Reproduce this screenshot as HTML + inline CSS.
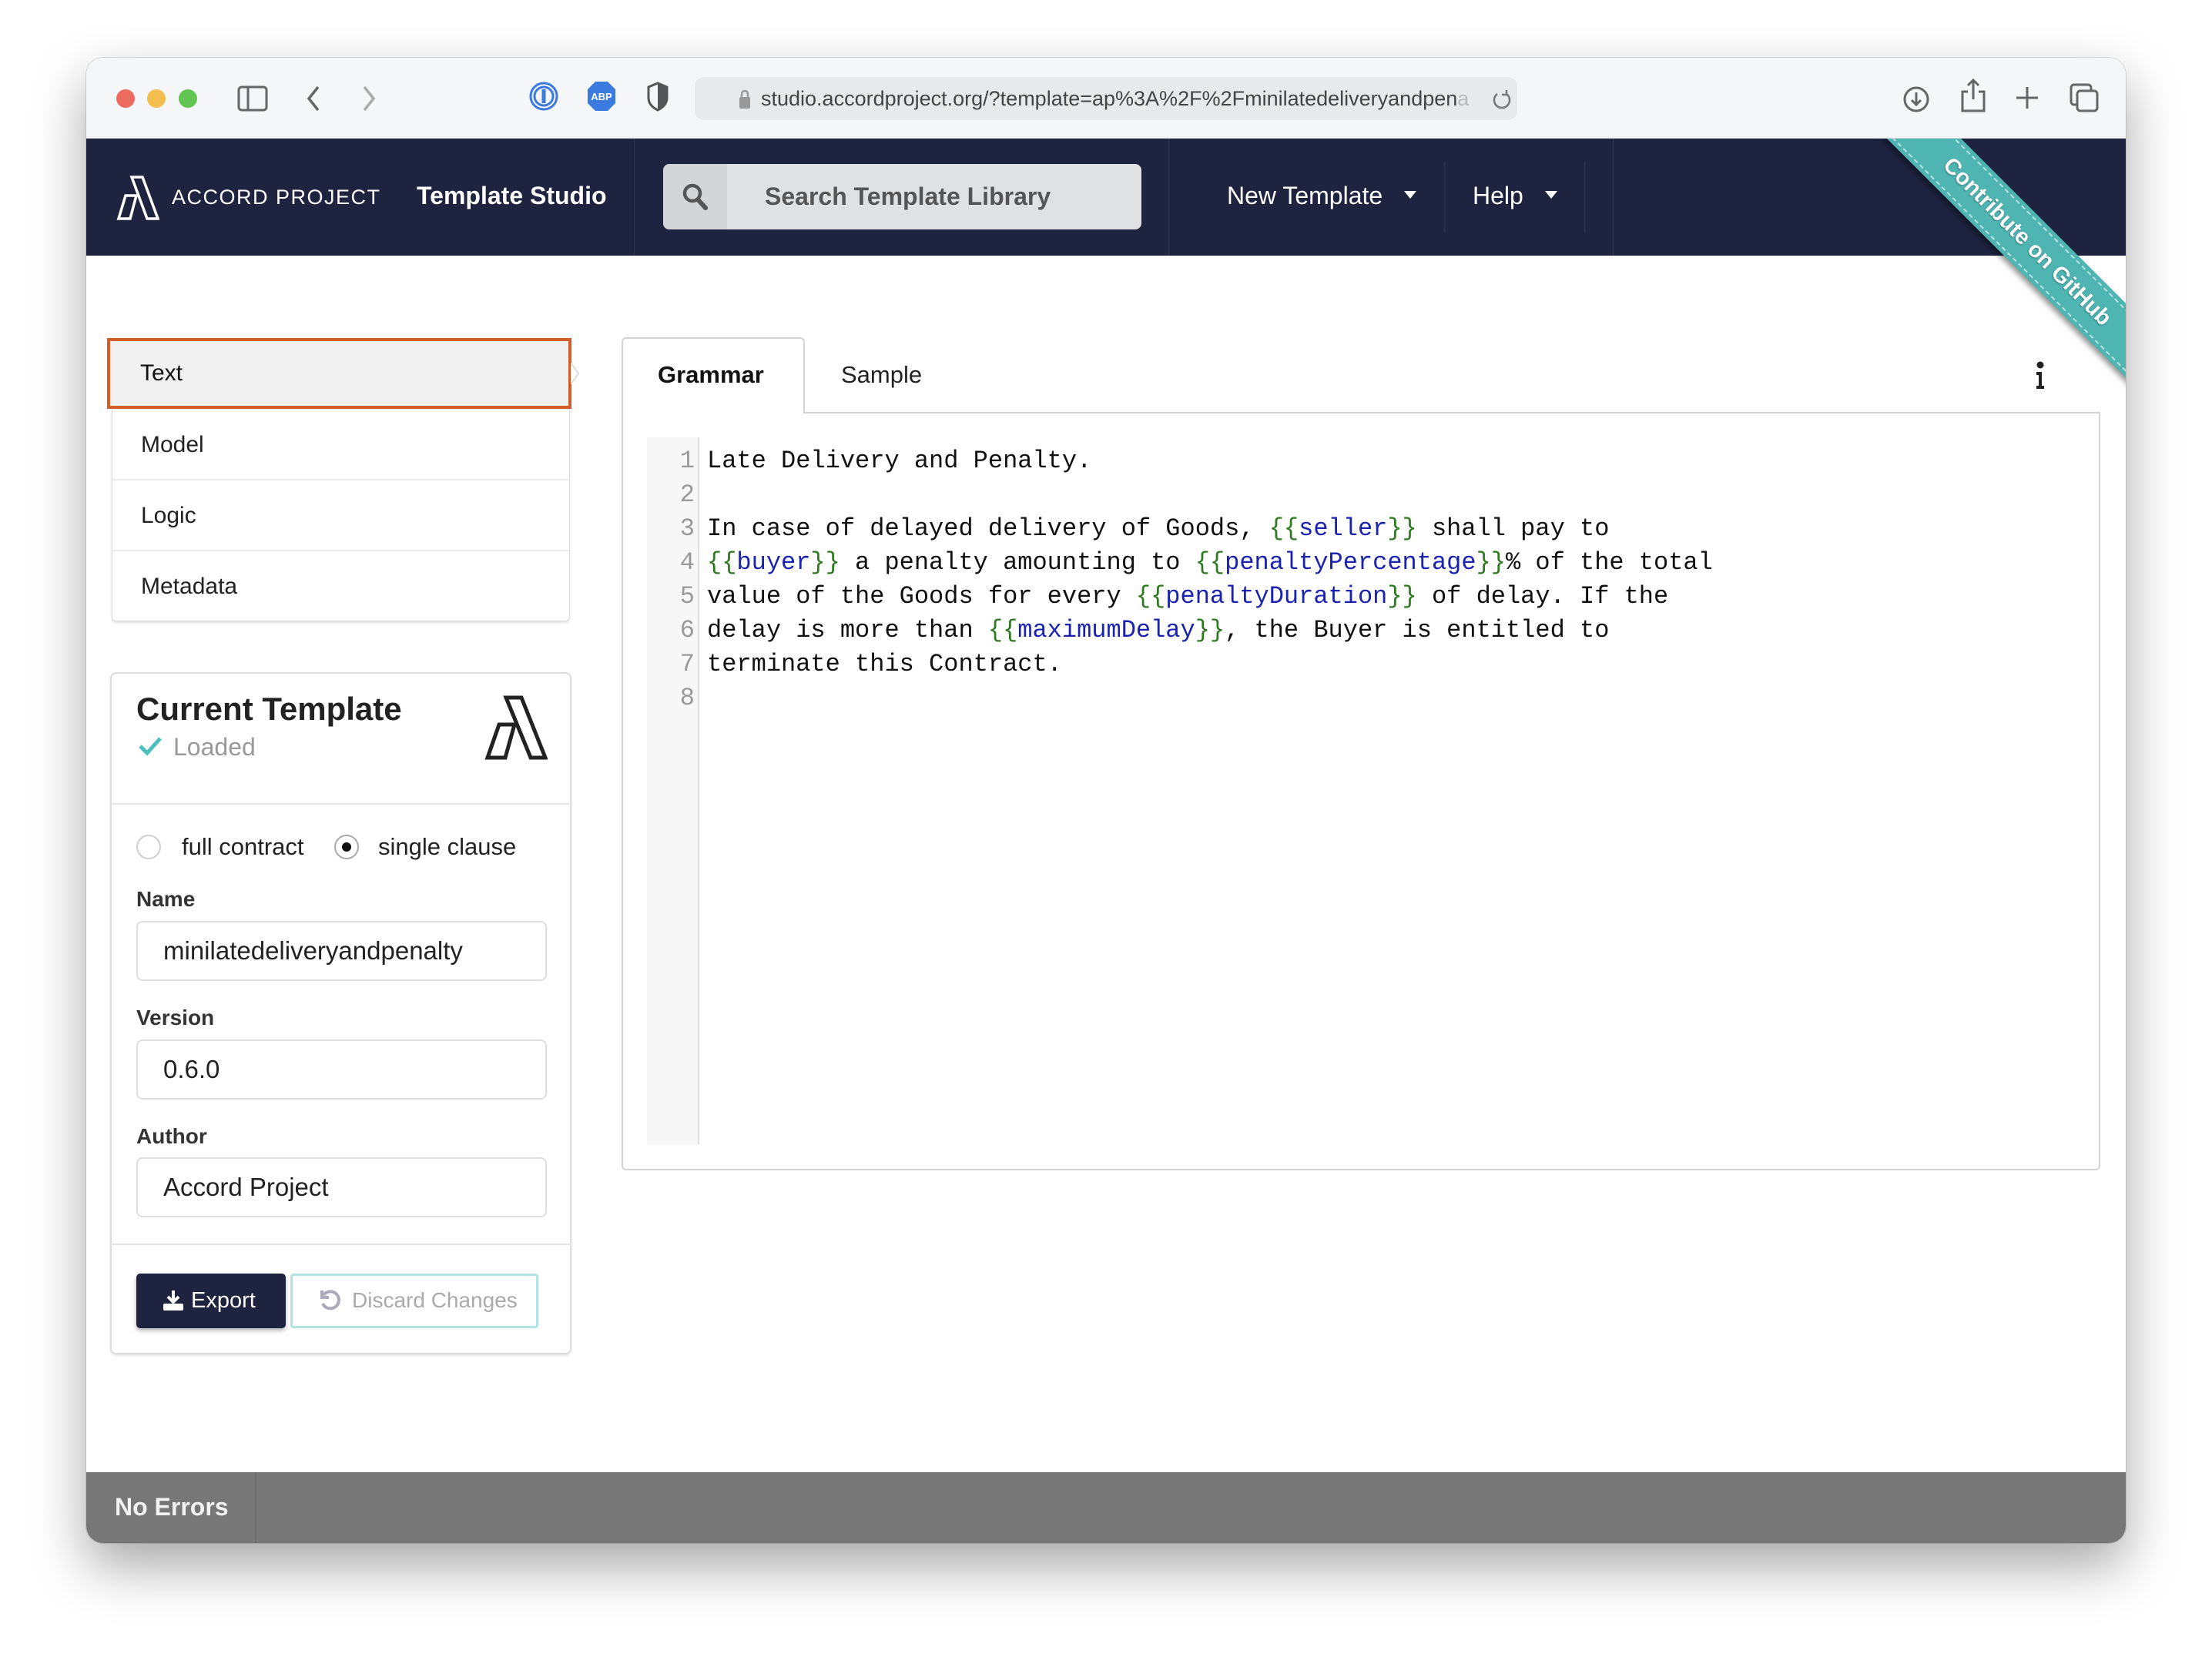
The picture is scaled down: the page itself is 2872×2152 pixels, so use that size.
<!DOCTYPE html>
<html><head><meta charset="utf-8">
<style>
*{box-sizing:border-box;margin:0;padding:0}
body{width:2872px;height:2152px;background:#fff;position:relative;overflow:hidden;font-family:"Liberation Sans",Arial,sans-serif;}
.abs{position:absolute}
#win{position:absolute;left:112px;top:75px;width:2648px;height:1929px;border-radius:22px;overflow:hidden;background:#fff;box-shadow:0 30px 70px rgba(0,0,0,0.35),0 0 0 1px rgba(0,0,0,0.12);}
.tb{left:0;top:0;width:2648px;height:105px;background:#f5f6f8;border-bottom:1px solid #d8d8d8}
.dot{width:24px;height:24px;border-radius:50%;top:41px}
.nav{left:0;top:105px;width:2648px;height:152px;background:#1e233f}
.vd{width:1px;background:#2f3552}
.menu{left:33px;top:364px;width:595px;height:368px;border:1px solid #dcdcdc;border-radius:6px;box-shadow:0 2px 3px rgba(0,0,0,.12);background:#fff}
.mi{position:absolute;left:0;width:100%;height:92px;font-size:30px;color:#222;padding-left:37px;line-height:92px;border-top:2px solid #ececec}
.code{font-family:"Liberation Mono","DejaVu Sans Mono",monospace;font-size:32px;line-height:44px;white-space:pre;color:#111}
.g{color:#2f7a20}.b{color:#1a22b0}
.lab{font-size:28px;font-weight:bold;color:#333}
.inp{left:65px;width:533px;height:78px;border:2px solid #dedede;border-radius:8px;font-size:33px;color:#222;padding-left:33px;line-height:74px;font-family:"Liberation Sans",sans-serif}
</style></head><body>
<div id="win">
  <div class="abs tb">
    <div class="abs dot" style="left:39px;background:#ec6a5e"></div>
    <div class="abs dot" style="left:79px;background:#f5bf4f"></div>
    <div class="abs dot" style="left:120px;background:#61c554"></div>
    <svg class="abs" style="left:196px;top:36px" width="40" height="34" viewBox="0 0 40 34"><rect x="2" y="2" width="36" height="30" rx="4" fill="none" stroke="#666" stroke-width="3"/><line x1="14" y1="2" x2="14" y2="32" stroke="#666" stroke-width="3"/></svg>
    <svg class="abs" style="left:283px;top:35px" width="24" height="36"><path d="M18 3 L6 18 L18 33" fill="none" stroke="#666" stroke-width="3.5"/></svg>
    <svg class="abs" style="left:355px;top:35px" width="24" height="36"><path d="M6 3 L18 18 L6 33" fill="none" stroke="#aaa" stroke-width="3.5"/></svg>
    <svg class="abs" style="left:574px;top:29px" width="40" height="42"><circle cx="20" cy="21" r="17" fill="none" stroke="#3b7be0" stroke-width="3"/><circle cx="20" cy="21" r="12" fill="none" stroke="#3b7be0" stroke-width="3"/><rect x="17.5" y="12" width="5" height="18" fill="#3b7be0"/></svg>
    <svg class="abs" style="left:649px;top:29px" width="40" height="42"><polygon points="12,2 28,2 38,12 38,30 28,40 12,40 2,30 2,12" fill="#3b7be0"/><text x="20" y="26" fill="#fff" font-size="13" font-weight="bold" text-anchor="middle" font-family="Liberation Sans">ABP</text></svg>
    <svg class="abs" style="left:727px;top:30px" width="30" height="40"><path d="M15 3 L27 8 L27 22 C27 30 21 35 15 38 C9 35 3 30 3 22 L3 8 Z" fill="none" stroke="#555" stroke-width="3"/><path d="M15 3 L27 8 L27 22 C27 30 21 35 15 38 Z" fill="#555"/></svg>
    <div class="abs" style="left:790px;top:25px;width:1068px;height:56px;background:#e8e9eb;border-radius:12px"></div>
    <svg class="abs" style="left:846px;top:40px" width="18" height="28"><rect x="2" y="11" width="14" height="15" rx="2" fill="#999"/><path d="M5 12 V7 a4 4 0 0 1 8 0 V12" fill="none" stroke="#999" stroke-width="2.5"/></svg>
    <div class="abs" style="left:876px;top:31px;font-size:27px;color:#444;line-height:44px;white-space:nowrap;width:930px;overflow:hidden">studio.accordproject.org/?template=ap%3A%2F%2Fminilatedeliveryandpen<span style="color:#bbb">a</span></div>
    <svg class="abs" style="left:1824px;top:39px" width="28" height="30"><path d="M20 8 A10 10 0 1 1 8 8" fill="none" stroke="#777" stroke-width="2.5"/><path d="M20 3 L20 9 L14 9" fill="none" stroke="#777" stroke-width="2.5"/></svg>
    <svg class="abs" style="left:2358px;top:36px" width="36" height="36"><circle cx="18" cy="18" r="15" fill="none" stroke="#666" stroke-width="3"/><path d="M18 9 V25 M12 19 L18 25 L24 19" fill="none" stroke="#666" stroke-width="3"/></svg>
    <svg class="abs" style="left:2432px;top:26px" width="36" height="46"><path d="M18 3 V28 M11 10 L18 3 L25 10" fill="none" stroke="#666" stroke-width="3"/><path d="M11 18 H4 V43 H32 V18 H25" fill="none" stroke="#666" stroke-width="3"/></svg>
    <svg class="abs" style="left:2502px;top:34px" width="36" height="36"><path d="M18 4 V32 M4 18 H32" stroke="#666" stroke-width="3"/></svg>
    <svg class="abs" style="left:2574px;top:32px" width="40" height="40"><rect x="3" y="3" width="26" height="26" rx="4" fill="none" stroke="#666" stroke-width="3"/><rect x="11" y="11" width="26" height="26" rx="4" fill="#f5f6f8" stroke="#666" stroke-width="3"/></svg>
  </div>

  <div class="abs nav">
    <svg class="abs" style="left:39px;top:48px" width="56" height="58" viewBox="0 0 56 58"><path d="M20 2 H34 L54 56 H40 Z" fill="none" stroke="#fff" stroke-width="3.5"/><path d="M12 26 H26 L18 56 H3 Z" fill="none" stroke="#fff" stroke-width="3.5"/></svg>
    <div class="abs" style="left:111px;top:58px;font-size:27px;letter-spacing:1.5px;color:#fff;line-height:36px">ACCORD PROJECT</div>
    <div class="abs" style="left:429px;top:54px;font-size:32px;font-weight:bold;color:#fff;line-height:40px">Template Studio</div>
    <div class="abs vd" style="left:711px;top:0;height:152px"></div>
    <div class="abs" style="left:749px;width:621px;height:85px;background:#e0e1e2;border-radius:8px;top:33px;overflow:hidden">
      <div class="abs" style="left:0;top:0;width:83px;height:85px;background:#d4d5d6"></div>
      <svg class="abs" style="left:24px;top:24px" width="36" height="38"><circle cx="14" cy="14" r="10" fill="none" stroke="#555" stroke-width="4.5"/><path d="M21 22 L31 33" stroke="#555" stroke-width="6" stroke-linecap="round"/></svg>
      <div class="abs" style="left:132px;top:22px;font-size:32px;font-weight:bold;color:#555;line-height:40px">Search Template Library</div>
    </div>
    <div class="abs vd" style="left:1405px;top:0;height:152px"></div>
    <div class="abs" style="left:1481px;top:52px;font-size:32px;color:#fff;line-height:44px">New Template</div>
    <svg class="abs" style="left:1711px;top:68px" width="16" height="12"><path d="M0 0 H16 L8 10 Z" fill="#fff"/></svg>
    <div class="abs vd" style="left:1763px;top:30px;height:92px"></div>
    <div class="abs" style="left:1800px;top:52px;font-size:32px;color:#fff;line-height:44px">Help</div>
    <svg class="abs" style="left:1894px;top:68px" width="16" height="12"><path d="M0 0 H16 L8 10 Z" fill="#fff"/></svg>
    <div class="abs vd" style="left:1945px;top:30px;height:92px"></div>
    <div class="abs vd" style="left:1982px;top:0;height:152px"></div>
  </div>

  <div class="abs" style="left:2100px;top:105px;width:548px;height:500px;overflow:hidden">
    <div class="abs" style="left:120px;top:100px;width:600px;height:68px;background:#4fb5b3;transform:rotate(45deg);transform-origin:center;box-shadow:0 4px 8px rgba(0,0,0,.45);">
      <div style="position:absolute;left:0;right:0;top:5px;bottom:5px;border-top:2px dashed rgba(255,255,255,.6);border-bottom:2px dashed rgba(255,255,255,.6);text-align:center;font-size:29px;font-weight:bold;color:#fff;line-height:54px;text-shadow:0 1px 2px rgba(0,0,0,.4)">Contribute on GitHub</div>
    </div>
  </div>

  <div class="abs menu">
    <div class="mi" style="top:0;border-top:none;height:90px">Text</div>
    <div class="mi" style="top:90px">Model</div>
    <div class="mi" style="top:182px">Logic</div>
    <div class="mi" style="top:274px">Metadata</div>
  </div>
  <div class="abs" style="left:27px;top:364px;width:603px;height:92px;border:4px solid #d35d27;background:#f1f1f1;font-size:30px;color:#111;padding-left:39px;line-height:84px">Text</div>
  <svg class="abs" style="left:629px;top:396px" width="12" height="28"><path d="M0 0 L10 14 L0 28" fill="#fff" stroke="#ddd" stroke-width="2"/></svg>

  <div class="abs" style="left:31px;top:798px;width:599px;height:886px;border:2px solid #dcdcdc;border-radius:8px;box-shadow:0 2px 3px rgba(0,0,0,.1)"></div>
  <div class="abs" style="left:65px;top:821px;font-size:42px;font-weight:bold;color:#222;line-height:50px">Current Template</div>
  <svg class="abs" style="left:67px;top:881px" width="32" height="26"><path d="M3 13 L12 22 L29 3" fill="none" stroke="#4dbfbf" stroke-width="5"/></svg>
  <div class="abs" style="left:113px;top:875px;font-size:32px;color:#999;line-height:40px">Loaded</div>
  <svg class="abs" style="left:517px;top:828px" width="82" height="84" viewBox="0 0 82 84"><path d="M28 3 H48 L79 81 H60 Z" fill="none" stroke="#222" stroke-width="5"/><path d="M19 38 H39 L27 81 H4 Z" fill="none" stroke="#222" stroke-width="5"/></svg>
  <div class="abs" style="left:32px;top:968px;width:597px;height:2px;background:#e6e6e6"></div>
  <div class="abs" style="left:65px;top:1009px;width:32px;height:32px;border:2px solid #d0d0d0;border-radius:50%"></div>
  <div class="abs" style="left:124px;top:1005px;font-size:31px;color:#222;line-height:40px">full contract</div>
  <div class="abs" style="left:322px;top:1009px;width:32px;height:32px;border:2px solid #aaa;border-radius:50%"></div>
  <div class="abs" style="left:332px;top:1019px;width:12px;height:12px;background:#111;border-radius:50%"></div>
  <div class="abs" style="left:379px;top:1005px;font-size:31px;color:#222;line-height:40px">single clause</div>

  <div class="abs lab" style="left:65px;top:1076px;line-height:34px">Name</div>
  <div class="abs inp" style="top:1121px">minilatedeliveryandpenalty</div>
  <div class="abs lab" style="left:65px;top:1230px;line-height:34px">Version</div>
  <div class="abs inp" style="top:1275px">0.6.0</div>
  <div class="abs lab" style="left:65px;top:1384px;line-height:34px">Author</div>
  <div class="abs inp" style="top:1428px">Accord Project</div>
  <div class="abs" style="left:32px;top:1540px;width:597px;height:2px;background:#e6e6e6"></div>
  <div class="abs" style="left:65px;top:1579px;width:194px;height:71px;background:#1e233f;border-radius:5px;box-shadow:0 3px 6px rgba(0,0,0,.3)"></div>
  <svg class="abs" style="left:99px;top:1600px" width="28" height="28"><path d="M14 1 V15 M7 9 L14 16 L21 9" fill="none" stroke="#fff" stroke-width="4"/><rect x="1" y="18" width="26" height="9" rx="2" fill="#fff"/></svg>
  <div class="abs" style="left:136px;top:1594px;font-size:29px;color:#fff;line-height:40px">Export</div>
  <div class="abs" style="left:265px;top:1579px;width:322px;height:71px;border:3px solid #b2e2e2;border-radius:4px"></div>
  <svg class="abs" style="left:302px;top:1599px" width="30" height="30"><path d="M6 8 A11 11 0 1 1 5 19" fill="none" stroke="#aab" stroke-width="4"/><path d="M4 2 V11 H13" fill="none" stroke="#aab" stroke-width="4"/></svg>
  <div class="abs" style="left:345px;top:1594px;font-size:28px;color:#aaa;line-height:40px">Discard Changes</div>

  <div class="abs" style="left:695px;top:460px;width:1920px;height:985px;border:2px solid #d4d4d5;border-radius:0 0 6px 6px"></div>
  <div class="abs" style="left:695px;top:363px;width:238px;height:99px;border:2px solid #d4d4d5;border-bottom:none;border-radius:6px 6px 0 0;background:#fff"></div>
  <div class="abs" style="left:742px;top:390px;font-size:31px;font-weight:bold;color:#111;line-height:44px">Grammar</div>
  <div class="abs" style="left:980px;top:390px;font-size:31px;color:#222;line-height:44px">Sample</div>
  <svg class="abs" style="left:2529px;top:394px" width="16" height="38"><circle cx="8" cy="5" r="4.5" fill="#222"/><path d="M3 14 H10 V32 H13 V36 H3 V32 H6 V18 H3 Z" fill="#222"/></svg>

  <div class="abs" style="left:728px;top:493px;width:68px;height:919px;background:#f7f7f7;border-right:2px solid #e0e0e0"></div>
  <div class="abs code" style="left:728px;top:502px;width:62px;text-align:right;color:#999">1
2
3
4
5
6
7
8</div>
  <div class="abs code" style="left:806px;top:502px">Late Delivery and Penalty.

In case of delayed delivery of Goods, <span class="g">{{</span><span class="b">seller</span><span class="g">}}</span> shall pay to
<span class="g">{{</span><span class="b">buyer</span><span class="g">}}</span> a penalty amounting to <span class="g">{{</span><span class="b">penaltyPercentage</span><span class="g">}}</span>% of the total
value of the Goods for every <span class="g">{{</span><span class="b">penaltyDuration</span><span class="g">}}</span> of delay. If the
delay is more than <span class="g">{{</span><span class="b">maximumDelay</span><span class="g">}}</span>, the Buyer is entitled to
terminate this Contract.
</div>

  <div class="abs" style="left:0;top:1837px;width:2648px;height:92px;background:#777"></div>
  <div class="abs" style="left:219px;top:1837px;width:2px;height:92px;background:#6c6c6c"></div>
  <div class="abs" style="left:37px;top:1862px;font-size:32px;font-weight:bold;color:#f2f2f2;line-height:40px">No Errors</div>
</div>
</body></html>
